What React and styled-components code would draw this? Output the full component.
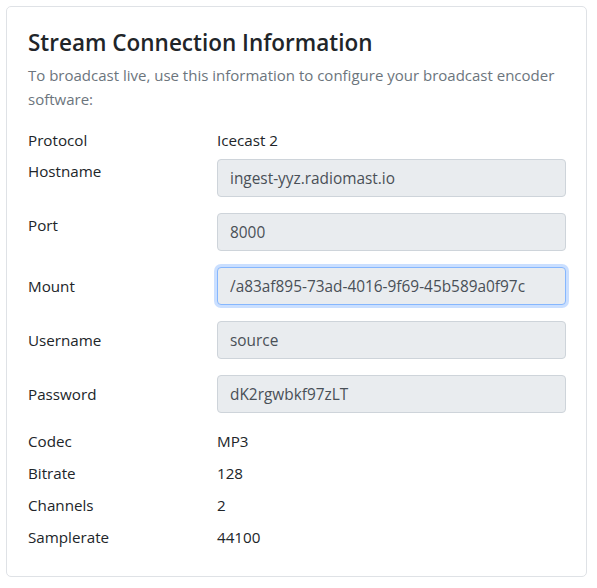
import React from 'react'
import styled, { createGlobalStyle } from 'styled-components'

const GlobalStyle = createGlobalStyle`
    * { box-sizing: border-box; }
    body {
        margin: 0;
        background: #fff;
        font-family: "Open Sans", "Noto Sans", sans-serif;
        color: #212529;
    }
`

const Page = styled.div`
    padding: 6px 10px 10px 6px;
`

const Card = styled.section`
    border: 1px solid #dfe2e6;
    border-radius: 5px;
    padding: 21px 20px 27px 21px;
    background: #fff;
`

const Title = styled.h2`
    margin: 0 0 6px;
    font-size: 22.5px;
    font-weight: 600;
    line-height: 29px;
    color: #212529;
`

const Lead = styled.p`
    margin: 0 0 17px;
    font-size: 15px;
    line-height: 24px;
    color: #6c757d;
`

const Row = styled.div`
    display: flex;
    align-items: ${p => (p.$center ? 'center' : 'flex-start')};
    margin-bottom: ${p => p.$gap}px;
`

const Label = styled.div`
    width: 189px;
    flex-shrink: 0;
    font-size: 15.2px;
    line-height: 24px;
`

const Value = styled.div`
    flex: 1;
    font-size: 15.2px;
    line-height: 24px;
`

const Field = styled.input`
    flex: 1;
    min-width: 0;
    height: 38px;
    padding: 6px 12px;
    font-family: inherit;
    font-size: 15.4px;
    color: #495057;
    background: #e9ecef;
    border: 1px solid ${p => (p.$focused ? '#86b7fe' : '#ced4da')};
    border-radius: 4px;
    outline: none;
    box-shadow: ${p => (p.$focused ? '0 0 0 3px rgba(13, 110, 253, 0.22)' : 'none')};
`

const info = [
    { label: 'Protocol', value: 'Icecast 2', gap: 7 },
    { label: 'Hostname', field: 'ingest-yyz.radiomast.io', gap: 16 },
    { label: 'Port', field: '8000', gap: 16 },
    { label: 'Mount', field: '/a83af895-73ad-4016-9f69-45b589a0f97c', center: true, focused: true, gap: 16 },
    { label: 'Username', field: 'source', center: true, gap: 16 },
    { label: 'Password', field: 'dK2rgwbkf97zLT', center: true, gap: 16 },
    { label: 'Codec', value: 'MP3', gap: 8 },
    { label: 'Bitrate', value: '128', gap: 8 },
    { label: 'Channels', value: '2', gap: 8 },
    { label: 'Samplerate', value: '44100', gap: 0 },
]

export default function App() {
    return (
        <Page>
            <GlobalStyle />
            <Card>
                <Title>Stream Connection Information</Title>
                <Lead>To broadcast live, use this information to configure your broadcast encoder software:</Lead>
                {info.map(item => (
                    <Row key={item.label} $gap={item.gap} $center={item.center}>
                        <Label>{item.label}</Label>
                        {item.field !== undefined
                            ? <Field readOnly value={item.field} $focused={item.focused} />
                            : <Value>{item.value}</Value>}
                    </Row>
                ))}
            </Card>
        </Page>
    )
}
